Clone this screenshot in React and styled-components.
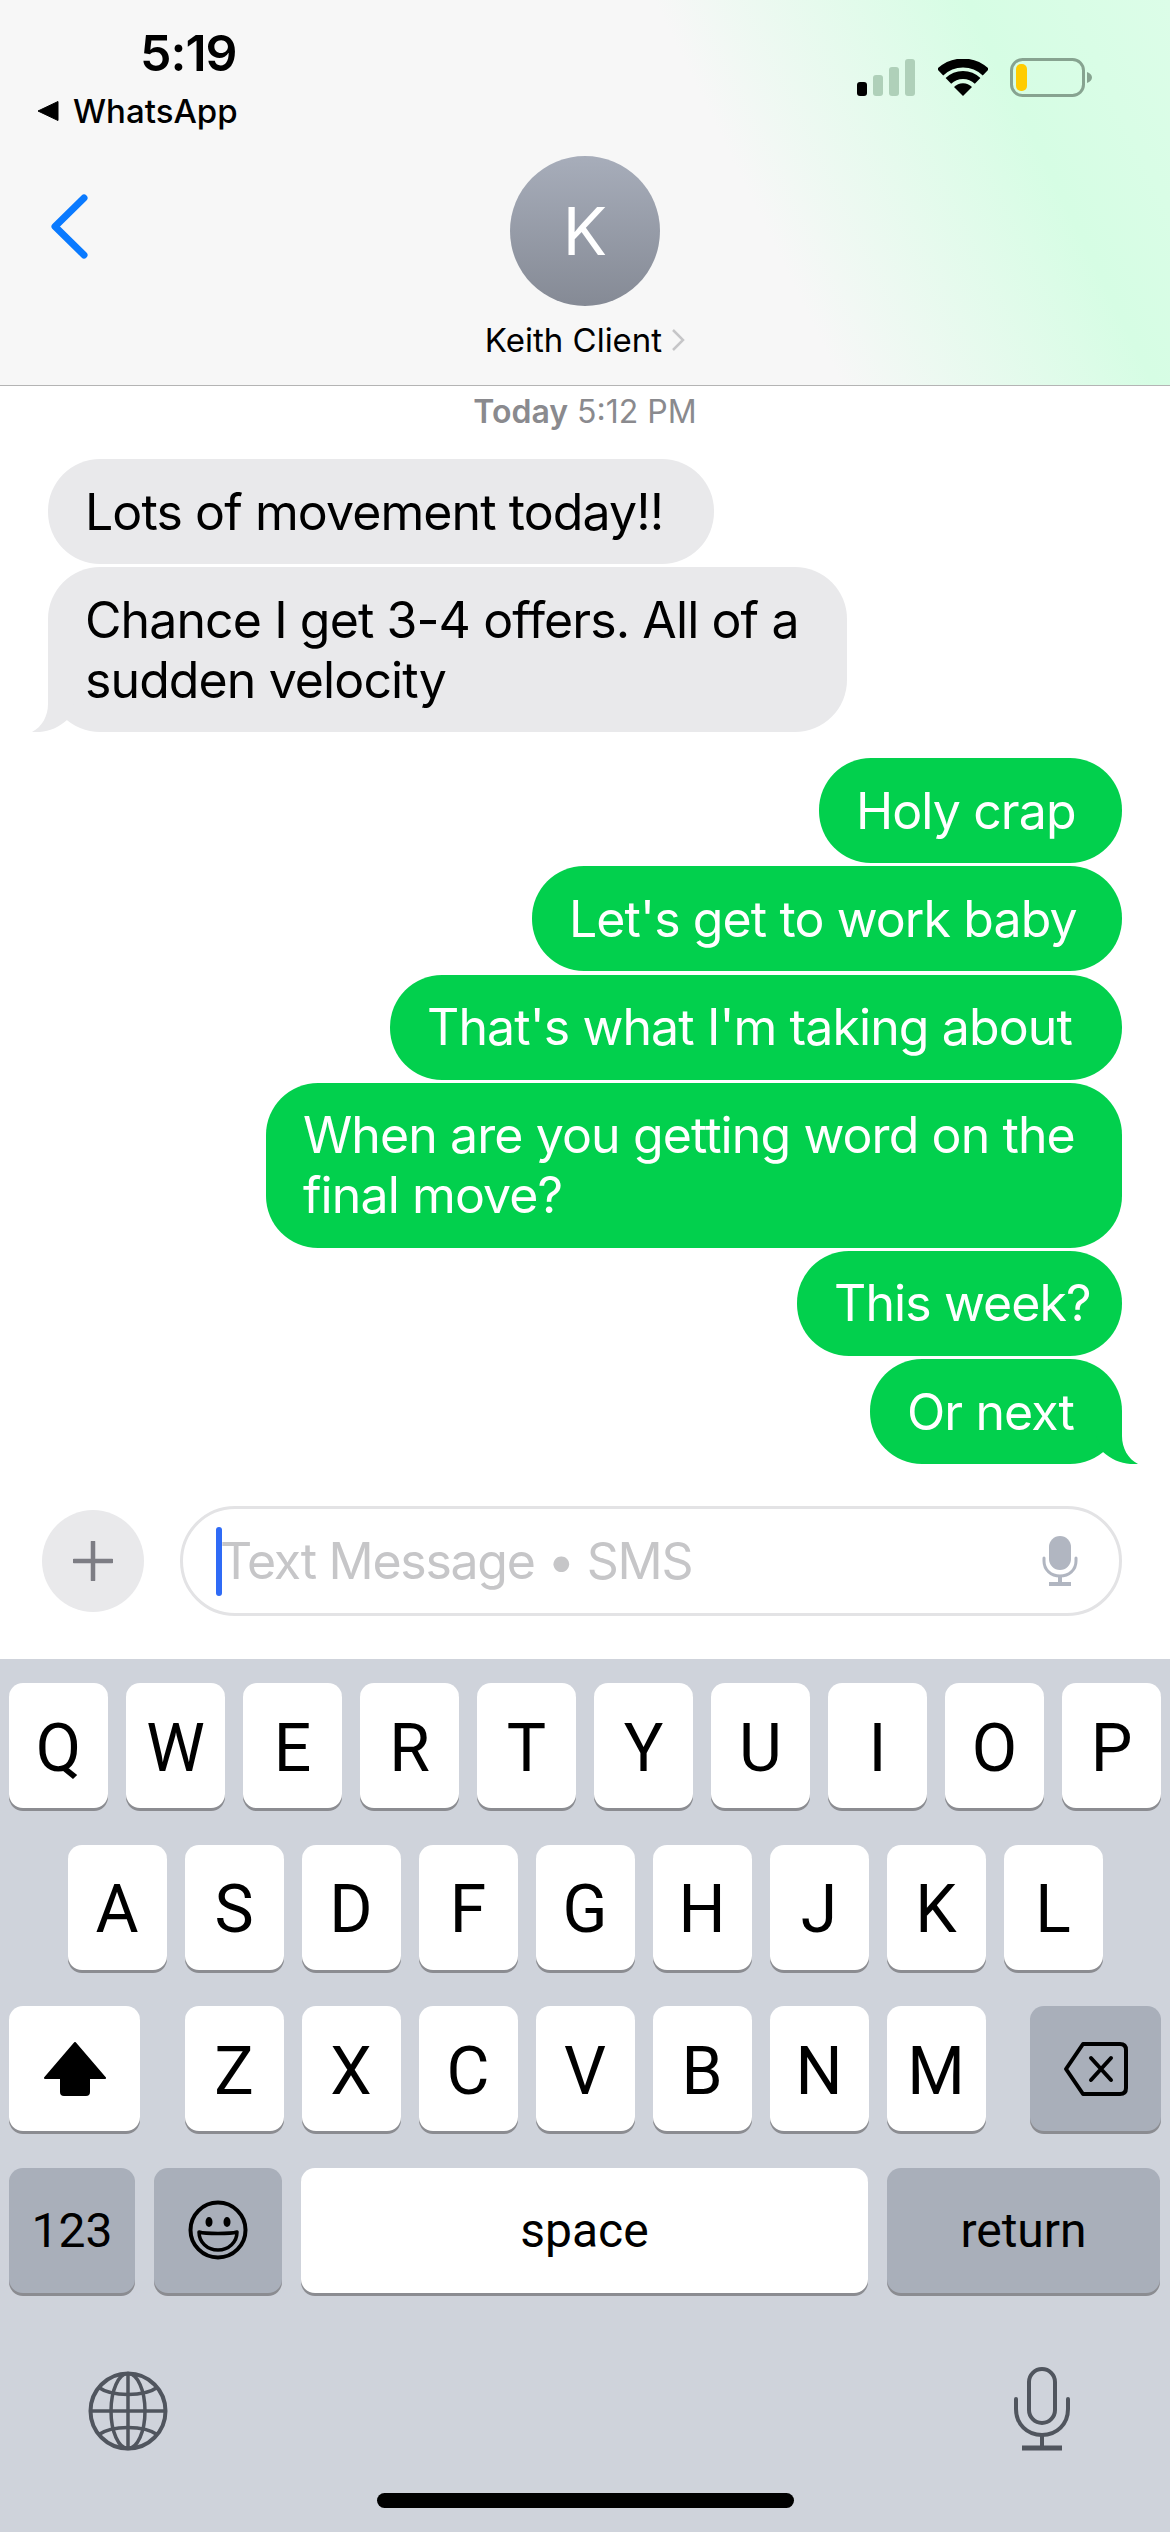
import React from 'react';
import styled, { createGlobalStyle } from 'styled-components';

const GlobalStyle = createGlobalStyle`
    html, body {
        margin: 0;
        padding: 0;
        background: #fff;
    }
    * {
        box-sizing: border-box;
    }
`;

const Page = styled.div`
    display: flex;
    flex-direction: column;
    width: 1170px;
    height: 2532px;
    overflow: hidden;
    font-family: Inter, "Liberation Sans", sans-serif;
    color: #000;
    background: #fff;
`;

/* Header */
const Header = styled.header`
    flex: none;
    height: 386px;
    padding-top: 25px;
    border-bottom: 1px solid #b4b4b4;
    background: linear-gradient(64deg, #f7f7f7 62%, #d6fde4 85%, #dcfde8 100%);
`;

const StatusBar = styled.div`
    display: flex;
    justify-content: space-between;
    height: 131px;
    padding: 0 78px 0 37px;
`;

const StatusLeft = styled.div`
    display: flex;
    flex-direction: column;
`;

const Time = styled.div`
    margin-left: 103px;
    font-size: 50px;
    line-height: 56px;
    font-weight: 600;
    letter-spacing: -1px;
`;

const BackApp = styled.div`
    display: flex;
    align-items: center;
    gap: 13px;
    margin-top: 10px;
    font-size: 33px;
    line-height: 40px;
    font-weight: 500;
`;

const StatusRight = styled.div`
    display: flex;
    align-items: flex-start;
    padding-top: 33px;
`;

const Nav = styled.div`
    display: grid;
    grid-template-columns: 1fr auto 1fr;
`;

const BackButton = styled.div`
    padding: 38px 0 0 50px;
`;

const Contact = styled.div`
    display: flex;
    flex-direction: column;
    align-items: center;
`;

const Avatar = styled.div`
    display: flex;
    align-items: center;
    justify-content: center;
    width: 150px;
    height: 150px;
    border-radius: 50%;
    font-size: 66px;
    font-weight: 400;
    color: #fff;
    background: linear-gradient(180deg, #a7adba, #858a95);
`;

const ContactName = styled.div`
    display: flex;
    align-items: center;
    gap: 9px;
    margin-top: 12px;
    font-size: 33px;
    line-height: 44px;
    font-weight: 400;
`;

/* Messages */
const Thread = styled.main`
    flex: none;
    display: flex;
    flex-direction: column;
    height: 1120px;
    padding: 0 48px;
`;

const Timestamp = styled.div`
    height: 73px;
    padding-top: 6px;
    text-align: center;
    font-size: 32px;
    line-height: 40px;
    color: #8a8a8e;

    b {
        font-weight: 600;
    }
`;

const Group = styled.div`
    display: flex;
    flex-direction: column;
    align-items: ${props => (props.$outgoing ? 'flex-end' : 'flex-start')};
    gap: 3.2px;
    margin-bottom: 26px;
`;

const Bubble = styled.div`
    position: relative;
    width: ${props => props.$width}px;
    padding: 22.5px 0 22.5px 37px;
    border-radius: 52px;
    font-size: 50px;
    line-height: 60px;
    letter-spacing: -0.9px;
    white-space: pre-line;
    color: ${props => (props.$outgoing ? '#fff' : '#000')};
    background: ${props => (props.$outgoing ? '#02d04d' : '#e9e9eb')};
`;

const Tail = styled.svg`
    position: absolute;
    bottom: 0;
    ${props => (props.$outgoing ? 'right: -16px;' : 'left: -16px;')}
    ${props => (props.$outgoing ? '' : 'transform: scaleX(-1);')}
`;

/* Input */
const Composer = styled.div`
    flex: none;
    display: flex;
    align-items: center;
    gap: 36px;
    height: 110px;
    margin-bottom: 43px;
    padding: 0 48px 0 42px;
`;

const PlusButton = styled.div`
    flex: none;
    display: flex;
    align-items: center;
    justify-content: center;
    width: 102px;
    height: 102px;
    border-radius: 50%;
    background: #e9e9eb;
`;

const Field = styled.div`
    flex: 1;
    display: flex;
    align-items: center;
    height: 110px;
    padding: 0 41px 0 33px;
    border: 3px solid #e3e3e5;
    border-radius: 55px;
`;

const Caret = styled.div`
    flex: none;
    width: 6px;
    height: 69px;
    border-radius: 3px;
    background: #2f6bf6;
`;

const Placeholder = styled.div`
    flex: 1;
    margin-left: -2px;
    font-size: 50px;
    line-height: 60px;
    letter-spacing: -1.3px;
    color: #c6c6c8;
`;

/* Keyboard */
const Keyboard = styled.section`
    flex: 1;
    display: flex;
    flex-direction: column;
    gap: 36.5px;
    padding: 24px 9px 0;
    background: #cfd3db;
`;

const KeyRow = styled.div`
    display: flex;
    justify-content: ${props => props.$justify || 'center'};
    gap: ${props => props.$gap || 18}px;
`;

const Key = styled.div`
    flex: none;
    display: flex;
    align-items: center;
    justify-content: center;
    width: ${props => props.$width || 99}px;
    height: 125px;
    border-radius: 14px;
    box-shadow: 0 3px 0 #8b8c91;
    font-family: Roboto, "Liberation Sans", sans-serif;
    font-size: 48px;
    font-weight: 400;
    color: #000;
    background: ${props => (props.$dark ? '#a9afba' : '#fff')};
`;

const LetterKey = styled(Key)`
    padding-top: 5px;
    font-size: 66px;
`;

const KeyGroup = styled.div`
    display: flex;
    gap: 18px;
`;

const BottomBar = styled.div`
    display: flex;
    justify-content: space-between;
    align-items: flex-end;
    margin-top: 38px;
    padding: 0 90px 0 79px;
`;

const HomeBar = styled.div`
    align-self: center;
    width: 417px;
    height: 15px;
    margin-top: 5px;
    border-radius: 8px;
    background: #000;
`;

const SignalIcon = () => (
    <svg width="58" height="37" viewBox="0 0 58 37" style={{ marginTop: 1 }}>
        <rect x="0" y="23" width="10" height="14" rx="3" fill="#000" />
        <rect x="16" y="16" width="10" height="21" rx="3" fill="#afd0b9" />
        <rect x="32" y="8" width="10" height="29" rx="3" fill="#afd0b9" />
        <rect x="48" y="0" width="10" height="37" rx="3" fill="#afd0b9" />
    </svg>
);

const WifiIcon = () => (
    <svg width="50" height="37" viewBox="0 0 50 37" style={{ marginLeft: 23, marginTop: 1 }}>
        <path d="M2.1 13.3A33 33 0 0 1 47.9 13.3" fill="none" stroke="#000" strokeWidth="9" />
        <path d="M10.4 21.9A21 21 0 0 1 39.6 21.9" fill="none" stroke="#000" strokeWidth="8" />
        <path d="M25 37L16 28A12.5 12.5 0 0 1 34 28Z" fill="#000" />
    </svg>
);

const BatteryIcon = () => (
    <svg width="82" height="39" viewBox="0 0 82 39" style={{ marginLeft: 22 }}>
        <rect x="1.5" y="1.5" width="72" height="36" rx="11" fill="none" stroke="#87a390" strokeWidth="3" />
        <rect x="6" y="6" width="11" height="27" rx="5" fill="#ffcc00" />
        <path d="M77 14C80 15 82 17 82 19.500C82 22 80 24 77 25Z" fill="#87a390" />
    </svg>
);

const LeftTriangle = () => (
    <svg width="23" height="22" viewBox="0 0 23 22">
        <path d="M1 11L21 1.500V20.500Z" fill="#000" stroke="#000" strokeLinejoin="round" />
    </svg>
);

const BackChevron = () => (
    <svg width="40" height="65" viewBox="0 0 40 65">
        <path d="M34 4L5 32.500L34 61" fill="none" stroke="#0a7aff" strokeWidth="7" strokeLinecap="round" strokeLinejoin="round" />
    </svg>
);

const NameChevron = () => (
    <svg width="14" height="24" viewBox="0 0 14 24">
        <path d="M2 2L12 12L2 22" fill="none" stroke="#c6c6c8" strokeWidth="2.500" />
    </svg>
);

const BubbleTail = ({ outgoing, color }) => (
    <Tail $outgoing={outgoing} width="42" height="52" viewBox="0 0 42 52">
        <path d="M0 0H26V24C26 36 32 47 42 52C29 53 17 49 7 40L0 24Z" fill={color} />
    </Tail>
);

const PlusIcon = () => (
    <svg width="40" height="40" viewBox="0 0 40 40">
        <path d="M20 1V39M1 20H39" stroke="#7d7d84" strokeWidth="4.500" strokeLinecap="round" />
    </svg>
);

const SmallMicIcon = () => (
    <svg width="36" height="50" viewBox="0 0 36 50">
        <rect x="7" y="0" width="22" height="34" rx="11" fill="#b1b6c1" />
        <path d="M2 22V25C2 34 9 40 18 40C27 40 34 34 34 25V22" fill="none" stroke="#b1b6c1" strokeWidth="3" strokeLinecap="round" />
        <path d="M18 40V46M7 48H29" stroke="#b1b6c1" strokeWidth="4" />
    </svg>
);

const ShiftIcon = () => (
    <svg width="64" height="54" viewBox="0 0 64 54">
        <path d="M32 1L62 36H46V50C46 52 45 53 43 53H21C19 53 18 52 18 50V36H2Z" fill="#000" stroke="#000" strokeWidth="2" strokeLinejoin="round" />
    </svg>
);

const DeleteIcon = () => (
    <svg width="66" height="54" viewBox="0 0 66 54">
        <path d="M20 2H57C61 2 63 4 63 8V46C63 50 61 52 57 52H20L3 27Z" fill="none" stroke="#000" strokeWidth="4" strokeLinejoin="round" />
        <path d="M28 16L48 38M48 16L28 38" stroke="#000" strokeWidth="4" strokeLinecap="round" />
    </svg>
);

const EmojiIcon = () => (
    <svg width="60" height="60" viewBox="0 0 60 60">
        <circle cx="30" cy="30" r="27.500" fill="none" stroke="#000" strokeWidth="4" />
        <ellipse cx="21" cy="22" rx="3.500" ry="5" fill="#000" />
        <ellipse cx="39" cy="22" rx="3.500" ry="5" fill="#000" />
        <path d="M11 32C18 34 42 34 49 32C49 42 41 50 30 50C19 50 11 42 11 32Z" fill="#a9afba" stroke="#000" strokeWidth="3.500" strokeLinejoin="round" />
    </svg>
);

const GlobeIcon = () => (
    <svg width="80" height="80" viewBox="0 0 80 80" fill="none" stroke="#50555e" strokeWidth="3.500">
        <circle cx="40" cy="40" r="37.500" strokeWidth="4" />
        <ellipse cx="40" cy="40" rx="17" ry="37.500" />
        <path d="M40 2V78M2 40H78" />
        <path d="M10 16C24 26 56 26 70 16M10 64C24 54 56 54 70 64" />
    </svg>
);

const MicIcon = () => (
    <svg width="58" height="84" viewBox="0 0 58 84" fill="none" stroke="#50555e" strokeWidth="4">
        <rect x="16" y="2" width="26" height="54" rx="13" />
        <path d="M3 32V42C3 57 14 68 29 68C44 68 55 57 55 42V32" strokeLinecap="round" />
        <path d="M29 68V79" />
        <path d="M9 81H49" strokeWidth="5" />
    </svg>
);

const incoming = [
    { text: 'Lots of movement today!!', width: 666 },
    { text: 'Chance I get 3-4 offers. All of a\nsudden velocity', width: 799 }
];

const outgoing = [
    { text: 'Holy crap', width: 303 },
    { text: "Let's get to work baby", width: 590 },
    { text: "That's what I'm taking about", width: 732 },
    { text: 'When are you getting word on the\nfinal move?', width: 856 },
    { text: 'This week?', width: 325 },
    { text: 'Or next', width: 252 }
];

const rows = ['QWERTYUIOP', 'ASDFGHJKL', 'ZXCVBNM'];

const renderGroup = (messages, isOutgoing) => (
    <Group $outgoing={isOutgoing}>
        {messages.map(({ text, width }, index) => (
            <Bubble key={index} $outgoing={isOutgoing} $width={width}>
                {text}
                {index === messages.length - 1 ? (
                    <BubbleTail outgoing={isOutgoing} color={isOutgoing ? '#02d04d' : '#e9e9eb'} />
                ) : null}
            </Bubble>
        ))}
    </Group>
);

const renderKeys = letters => letters.split('').map(letter => <LetterKey key={letter}>{letter}</LetterKey>);

const App = () => (
    <Page>
        <GlobalStyle />
        <Header>
            <StatusBar>
                <StatusLeft>
                    <Time>5:19</Time>
                    <BackApp>
                        <LeftTriangle />
                        WhatsApp
                    </BackApp>
                </StatusLeft>
                <StatusRight>
                    <SignalIcon />
                    <WifiIcon />
                    <BatteryIcon />
                </StatusRight>
            </StatusBar>
            <Nav>
                <BackButton>
                    <BackChevron />
                </BackButton>
                <Contact>
                    <Avatar>K</Avatar>
                    <ContactName>
                        Keith Client
                        <NameChevron />
                    </ContactName>
                </Contact>
            </Nav>
        </Header>

        <Thread>
            <Timestamp>
                <b>Today</b> 5:12 PM
            </Timestamp>
            {renderGroup(incoming, false)}
            {renderGroup(outgoing, true)}
        </Thread>

        <Composer>
            <PlusButton>
                <PlusIcon />
            </PlusButton>
            <Field>
                <Caret />
                <Placeholder>Text Message • SMS</Placeholder>
                <SmallMicIcon />
            </Field>
        </Composer>

        <Keyboard>
            <KeyRow>{renderKeys(rows[0])}</KeyRow>
            <KeyRow>{renderKeys(rows[1])}</KeyRow>
            <KeyRow $justify="space-between">
                <Key $width={131}>
                    <ShiftIcon />
                </Key>
                <KeyGroup>{renderKeys(rows[2])}</KeyGroup>
                <Key $width={131} $dark>
                    <DeleteIcon />
                </Key>
            </KeyRow>
            <KeyRow $gap={19} $justify="flex-start">
                <Key $width={126} $dark>123</Key>
                <Key $width={128} $dark>
                    <EmojiIcon />
                </Key>
                <Key $width={567}>space</Key>
                <Key $width={273} $dark>return</Key>
            </KeyRow>
            <BottomBar>
                <GlobeIcon />
                <MicIcon />
            </BottomBar>
            <HomeBar />
        </Keyboard>
    </Page>
);

export default App;
